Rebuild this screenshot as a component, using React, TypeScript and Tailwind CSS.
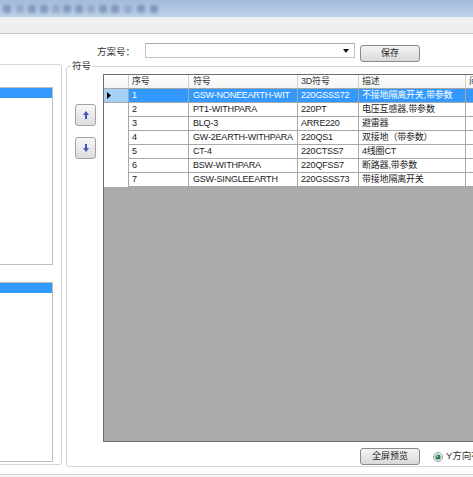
import React from 'react'

type Row = { no: string; sym: string; sym3d: string; desc: string }

const rows: Row[] = [
  { no: '1', sym: 'GSW-NONEEARTH-WIT', sym3d: '220GSSS72', desc: '不接地隔离开关,带参数' },
  { no: '2', sym: 'PT1-WITHPARA', sym3d: '220PT', desc: '电压互感器,带参数' },
  { no: '3', sym: 'BLQ-3', sym3d: 'ARRE220', desc: '避雷器' },
  { no: '4', sym: 'GW-2EARTH-WITHPARA', sym3d: '220QS1', desc: '双接地（带参数）' },
  { no: '5', sym: 'CT-4', sym3d: '220CTSS7', desc: '4线圈CT' },
  { no: '6', sym: 'BSW-WITHPARA', sym3d: '220QFSS7', desc: '断路器,带参数' },
  { no: '7', sym: 'GSW-SINGLEEARTH', sym3d: '220GSSS73', desc: '带接地隔离开关' },
]

// blurred toolbar glyphs in the title strip
const blobs = [3, 16, 28, 40, 52, 63, 75, 87, 99, 111, 124, 137, 150]

function ArrowBtn({ down }: { down?: boolean }) {
  return (
    <div className="w-[21px] h-[22px] rounded-[3px] border border-[#a3a3a3] bg-gradient-to-b from-[#f7f7f7] to-[#dcdcdc] flex items-center justify-center">
      <svg width="6" height="8" viewBox="0 0 6 8" className={down ? 'rotate-180' : ''}>
        <path d="M3 0 L6 4 H4 V8 H2 V4 H0 Z" fill="#3f56c4" />
      </svg>
    </div>
  )
}

function WinButton({ label, className }: { label: string; className?: string }) {
  return (
    <div
      className={`h-[17px] rounded-[3px] border border-[#8a8a8a] bg-gradient-to-b from-[#f4f4f4] to-[#d9d9d9] flex items-center justify-center text-[9px] text-[#222] ${className ?? ''}`}
    >
      {label}
    </div>
  )
}

export default function App() {
  return (
    <div className="w-[473px] h-[477px] overflow-hidden bg-white font-['Liberation_Sans','Noto_Sans_CJK_SC',sans-serif] text-[9px] text-[#222] flex flex-col">
      {/* title strip */}
      <div className="h-[17px] shrink-0 bg-gradient-to-b from-[#a3bcdc] to-[#bfd1e8] relative overflow-hidden">
        {blobs.map((x, i) => (
          <div
            key={x}
            className={`absolute top-[5px] w-[8px] h-[8px] rounded-[2px] blur-[1.5px] ${i % 3 === 0 ? 'bg-[#5f7aa3]/60' : i % 3 === 1 ? 'bg-[#7890b3]/55' : 'bg-[#4f6d96]/50'}`}
            style={{ left: x }}
          />
        ))}
      </div>
      <div className="h-[17px] shrink-0 bg-[#efefef] border-b border-[#c6c6c6]" />

      {/* body */}
      <div className="flex-1 flex min-h-0">
        {/* left group */}
        <div className="w-[62px] shrink-0 mt-[30px] h-[401px] border border-l-0 border-[#d6d6d6] rounded-r-[3px] pt-[22px] flex flex-col gap-[17px]">
          <div className="w-[53px] h-[178px] border border-l-0 border-[#bdbdbd]">
            <div className="h-[10px] bg-[#3399ff]" />
          </div>
          <div className="w-[53px] h-[180px] border border-l-0 border-[#bdbdbd]">
            <div className="h-[10px] bg-[#3399ff]" />
          </div>
        </div>

        {/* right column */}
        <div className="flex-1 flex flex-col min-w-0">
          <div className="h-[27px] shrink-0 flex items-start">
            <span className="ml-[35px] mt-[13px] leading-[10px] text-[9.5px] text-[#333] w-[48px]">方案号：</span>
            <div className="mt-[9px] w-[210px] h-[15px] border border-[#c2c2c2] border-t-[#a9a9a9] bg-white flex items-center justify-end pr-[5px]">
              <svg width="6" height="4" viewBox="0 0 6 4">
                <path d="M0 0 H6 L3 4 Z" fill="#111" />
              </svg>
            </div>
            <WinButton label="保存" className="mt-[11px] ml-[5px] w-[60px]" />
          </div>

          <fieldset className="ml-[4px] w-[430px] h-[406px] border border-[#d6d6d6] rounded-tl-[3px] rounded-bl-[3px] px-0 pb-0 flex flex-col">
            <legend className="ml-[4px] px-[1px] text-[9.5px] leading-[10px] text-[#333]">符号</legend>
            <div className="flex pt-[3px]">
              <div className="w-[36px] shrink-0 pl-[8px] pt-[30px] flex flex-col gap-[11px]">
                <ArrowBtn />
                <ArrowBtn down />
              </div>
              {/* data grid */}
              <div className="w-[380px] h-[368px] border border-[#6c6c6c] bg-[#ababab] flex flex-col tracking-[-0.2px]">
                <div className="flex h-[14px] bg-gradient-to-b from-white to-[#f4f4f4] border-b border-[#a6a6a6] text-[#333]">
                  <div className="w-[25px] border-r border-[#d0d0d0]" />
                  <div className="w-[60px] border-r border-[#d0d0d0] pl-[3px] leading-[13px]">序号</div>
                  <div className="w-[109px] border-r border-[#d0d0d0] pl-[4px] leading-[13px]">符号</div>
                  <div className="w-[61px] border-r border-[#d0d0d0] pl-[3px] leading-[13px]">3D符号</div>
                  <div className="w-[107px] border-r border-[#d0d0d0] pl-[3px] leading-[13px]">描述</div>
                  <div className="flex-1 pl-[3px] leading-[13px]">间</div>
                </div>
                {rows.map((r, i) => {
                  const sel = i === 0
                  const cell = sel
                    ? 'bg-[#3399ff] text-white border-r border-b border-[#a8a8a8]'
                    : 'bg-white text-[#1a1a1a] border-r border-b border-[#a8a8a8]'
                  return (
                    <div key={r.no} className="flex h-[14px] leading-[13px] whitespace-nowrap">
                      <div
                        className={`w-[25px] border-r border-[#a8a8a8] flex items-center pl-[3px] ${sel ? 'bg-[#a6d0f6] border-b' : 'bg-white'}`}
                      >
                        {sel && (
                          <svg width="4" height="7" viewBox="0 0 4 7">
                            <path d="M0 0 L4 3.5 L0 7 Z" fill="#000" />
                          </svg>
                        )}
                      </div>
                      <div className={`w-[60px] pl-[3px] overflow-hidden ${cell}`}>{r.no}</div>
                      <div className={`w-[109px] pl-[4px] overflow-hidden ${cell}`}>{r.sym}</div>
                      <div className={`w-[61px] pl-[3px] overflow-hidden ${cell}`}>{r.sym3d}</div>
                      <div className={`w-[107px] pl-[3px] overflow-hidden ${cell}`}>{r.desc}</div>
                      <div className={`flex-1 ${cell}`} />
                    </div>
                  )
                })}
              </div>
            </div>
            <div className="flex items-center mt-[6px]">
              <WinButton label="全屏预览" className="ml-[293px] w-[60px]" />
              <svg width="10" height="10" viewBox="0 0 10 10" className="ml-[13px]">
                <circle cx="5" cy="5" r="4.5" fill="#e9eef0" stroke="#9aa0a3" />
                <circle cx="5" cy="5" r="2.6" fill="#2e7d4a" />
                <circle cx="4.2" cy="4.2" r="0.9" fill="#9fe0b4" />
              </svg>
              <span className="ml-[3px] text-[9.5px] text-[#333] whitespace-nowrap">Y方向布置</span>
            </div>
          </fieldset>
        </div>
      </div>

      <div className="h-[3px] shrink-0 border-t border-[#d3d3d3] bg-[#f3f3f3]" />
    </div>
  )
}
